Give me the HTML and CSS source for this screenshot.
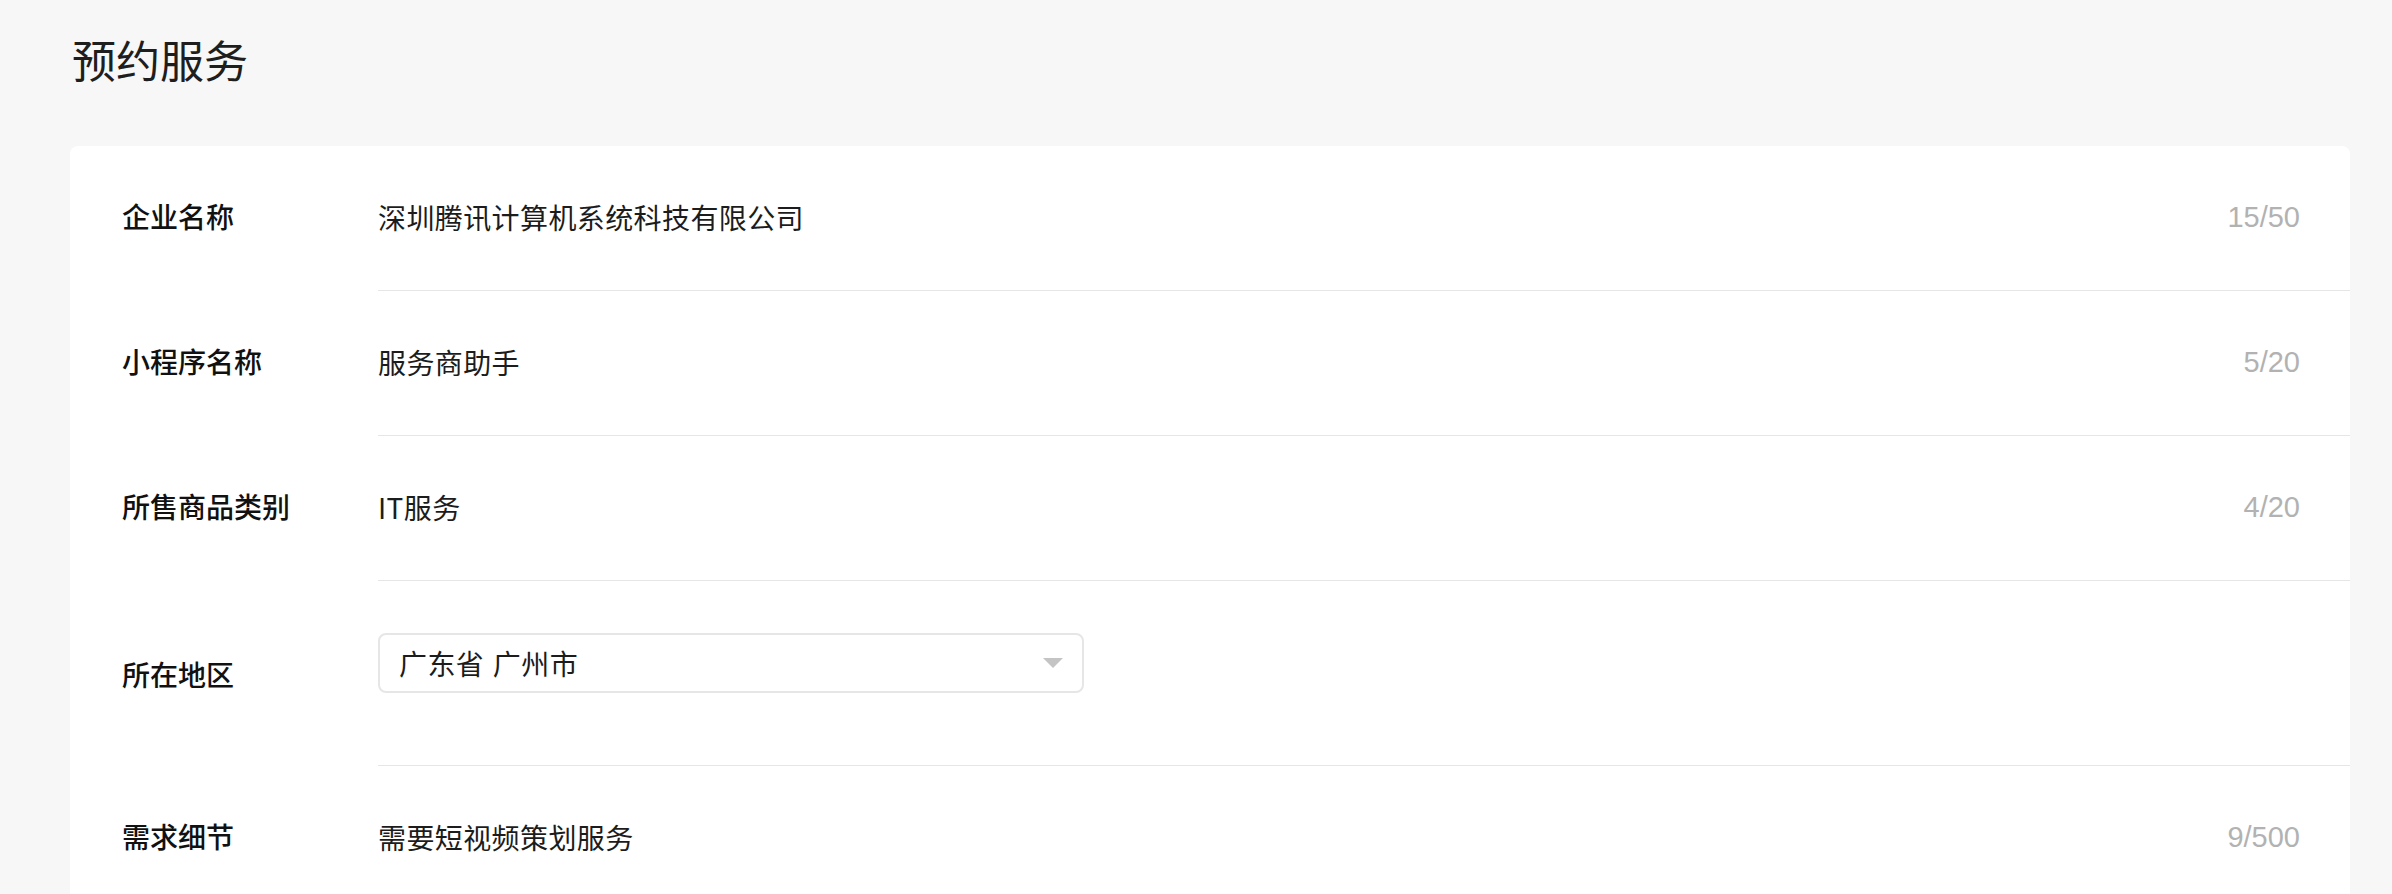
FILE: index.html
```html
<!DOCTYPE html>
<html lang="zh-CN">
<head>
<meta charset="utf-8">
<title>预约服务</title>
<link rel="stylesheet" href="styles.css">
</head>
<body>
<h1 class="page-title">预约服务</h1>
<div class="card">
  <div class="row">
    <div class="label">企业名称</div>
    <div class="field">
      <span class="value">深圳腾讯计算机系统科技有限公司</span>
      <span class="count">15/50</span>
    </div>
  </div>
  <div class="row">
    <div class="label">小程序名称</div>
    <div class="field">
      <span class="value">服务商助手</span>
      <span class="count">5/20</span>
    </div>
  </div>
  <div class="row">
    <div class="label">所售商品类别</div>
    <div class="field">
      <span class="value">IT服务</span>
      <span class="count">4/20</span>
    </div>
  </div>
  <div class="row row-tall">
    <div class="label label-region">所在地区</div>
    <div class="field field-select">
      <div class="select">
        <span class="select-text">广东省 广州市</span>
        <span class="select-arrow"></span>
      </div>
    </div>
  </div>
  <div class="row">
    <div class="label">需求细节</div>
    <div class="field">
      <span class="value">需要短视频策划服务</span>
      <span class="count">9/500</span>
    </div>
  </div>
</div>
</body>
</html>
```
FILE: styles.css
```css
html, body {
  margin: 0;
  padding: 0;
  background: #f7f7f7;
  font-family: "Noto Sans CJK SC", "Noto Sans", sans-serif;
  color: #1c1c1c;
}

.page-title {
  margin: 0;
  padding: 37px 0 0 72px;
  font-size: 44px;
  line-height: 44px;
  font-weight: 400;
  color: #1e1e1e;
  height: 44px;
}

.card {
  margin: 65px 42px 0 70px;
  background: #ffffff;
  border-radius: 8px 8px 0 0;
  overflow: hidden;
}

.row {
  display: flex;
  align-items: stretch;
}

.label {
  width: 308px;
  flex: 0 0 308px;
  box-sizing: border-box;
  padding: 0 0 5px 52px;
  display: flex;
  align-items: center;
  font-size: 28px;
  font-weight: 500;
  color: #111111;
  line-height: 40px;
}

.field {
  flex: 1;
  box-sizing: border-box;
  height: 145px;
  padding: 0 50px 3px 0;
  border-bottom: 1px solid #e6e6e6;
  display: flex;
  align-items: center;
  justify-content: space-between;
}

.value {
  font-size: 28px;
  line-height: 40px;
  letter-spacing: 0.4px;
  color: #1c1c1c;
}

.count {
  font-family: "Liberation Sans", "Noto Sans", sans-serif;
  font-size: 29px;
  line-height: 40px;
  color: #b2b2b2;
}

.row-tall .field {
  height: 185px;
}

.label-region {
  padding-bottom: 0;
  padding-top: 1px;
}

.field-select {
  align-items: flex-start;
}

.select {
  margin-top: 52px;
  width: 706px;
  height: 60px;
  box-sizing: border-box;
  border: 2px solid #e6e6e6;
  border-radius: 8px;
  display: flex;
  align-items: center;
  justify-content: space-between;
  padding: 0 19px 0 19px;
}

.select-text {
  font-size: 28px;
  line-height: 40px;
  letter-spacing: 0.4px;
  word-spacing: 2px;
  color: #1c1c1c;
}

.select-arrow {
  width: 0;
  height: 0;
  border-left: 10px solid transparent;
  border-right: 10px solid transparent;
  border-top: 10px solid #c4c4c4;
}
```
